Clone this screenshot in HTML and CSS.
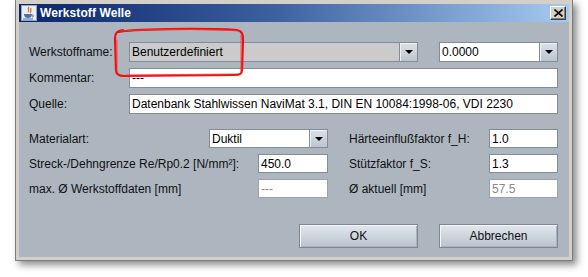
FILE: index.html
```html
<!DOCTYPE html>
<html>
<head>
<meta charset="utf-8">
<link rel="stylesheet" href="styles.css">
</head>
<body>
<div class="stage">
  <div class="window">
    <div class="titlebar">
      <svg class="appicon" width="16" height="16" viewBox="0 0 16 16">
        <rect x="0.5" y="0.5" width="15" height="15" fill="#e8eef6" stroke="#8ea6c8"/>
        <path d="M8 2 C6 4 9 5 7 7 M10 3 C9 5 11 6 9 8" stroke="#e0701c" stroke-width="1.3" fill="none"/>
        <path d="M3 9 H11 C11 12 9 13 7 13 C5 13 3 12 3 9 Z" fill="#4f6fa8"/>
        <path d="M11 10 C13 10 13 12 11 12" stroke="#4f6fa8" stroke-width="1" fill="none"/>
        <path d="M2 14 H12" stroke="#4f6fa8" stroke-width="1"/>
      </svg>
      <span class="title">Werkstoff Welle</span>
      <span class="closebtn">
        <svg width="9" height="8" viewBox="0 0 9 8"><path d="M0.5 0.5 L8.5 7.5 M8.5 0.5 L0.5 7.5" stroke="#000" stroke-width="1.6"/></svg>
      </span>
    </div>
    <div class="content">
      <div class="grid-top">
        <span class="label">Werkstoffname:</span>
        <div class="combo combo-ro">
          <span class="combo-text">Benutzerdefiniert</span>
          <span class="arrow"><i></i></span>
        </div>
        <span></span>
        <div class="combo">
          <span class="combo-text">0.0000</span>
          <span class="arrow"><i></i></span>
        </div>
        <span class="label">Kommentar:</span>
        <div class="field span-wide">---</div>
        <span class="label">Quelle:</span>
        <div class="field span-wide">Datenbank Stahlwissen NaviMat 3.1, DIN EN 10084:1998-06, VDI 2230</div>
      </div>
      <div class="grid-mid">
        <span class="label">Materialart:</span>
        <div class="combo combo-mat">
          <span class="combo-text">Duktil</span>
          <span class="arrow"><i></i></span>
        </div>
        <span></span>
        <span class="label">Härteeinflußfaktor f_H:</span>
        <div class="field">1.0</div>

        <span class="label span-label">Streck-/Dehngrenze Re/Rp0.2 [N/mm²]:</span>
        <div class="field">450.0</div>
        <span></span>
        <span class="label">Stützfaktor f_S:</span>
        <div class="field">1.3</div>

        <span class="label span-label">max. Ø Werkstoffdaten [mm]</span>
        <div class="field disabled">---</div>
        <span></span>
        <span class="label">Ø aktuell [mm]</span>
        <div class="field disabled">57.5</div>
      </div>
      <div class="buttons">
        <button class="btn">OK</button>
        <button class="btn">Abbrechen</button>
      </div>
    </div>
  </div>
  <svg class="markup" width="140" height="60" viewBox="110 25 140 60">
    <path d="M119 32 C130 29 200 28 237 30 C242 31 243 34 243 40 L242 70 C242 74 240 75 235 75 L124 76 C118 76 116 74 116 70 L115 38 C115 33 117 31 123 30" fill="none" stroke="#f01010" stroke-width="2.2" stroke-linecap="round"/>
    <path d="M121 31 C150 29 210 29 239 31 M241 35 L241 72 M236 74 L126 75 M117 71 L117 40" fill="none" stroke="#ff3030" stroke-width="1" stroke-linecap="round" opacity="0.8"/>
  </svg>
</div>
</body>
</html>
```

FILE: styles.css
```css
html, body {
  margin: 0;
  padding: 0;
  background: #ffffff;
}

.stage {
  position: relative;
  width: 588px;
  height: 277px;
  padding-left: 15px;
  box-sizing: border-box;
  font-family: "Liberation Sans", Arial, sans-serif;
  font-size: 12px;
  color: #000;
}

.window {
  width: 558px;
  box-sizing: border-box;
  border: 1px solid #7c7c7c;
  border-top: 0;
  padding: 4px 3px 3px 3px;
  background: #d4d0c8;
  box-shadow: 4px 4px 7px rgba(0, 0, 0, 0.45);
}

.titlebar {
  height: 18px;
  display: flex;
  align-items: center;
  padding: 0 3px 0 2px;
  background: linear-gradient(to right, #0a246a 0%, #3a5e9e 45%, #a6caf0 100%);
}

.appicon {
  flex: none;
}

.title {
  margin-left: 3px;
  color: #ffffff;
  font-weight: bold;
  font-size: 12px;
  letter-spacing: 0.1px;
  flex: 1;
}

.closebtn {
  width: 16px;
  height: 14px;
  box-sizing: border-box;
  background: #d4d0c8;
  border: 1px solid;
  border-color: #ffffff #404040 #404040 #ffffff;
  box-shadow: inset -1px -1px 0 #808080;
  display: flex;
  align-items: center;
  justify-content: center;
}

.content {
  height: 235px;
  box-sizing: border-box;
  background: #adb6bf;
  padding: 20px 11px 0 10px;
}

.label {
  display: flex;
  align-items: center;
  white-space: nowrap;
  color: #111;
  min-width: 0;
}

.grid-top {
  display: grid;
  grid-template-columns: 100px 289px 21px 119px;
  grid-template-rows: 20px 20px 20px;
  row-gap: 6px;
}

.span-wide {
  grid-column: 2 / 5;
}

.field {
  box-sizing: border-box;
  background: #ffffff;
  border: 1px solid #838d98;
  padding: 0 2px;
  display: flex;
  align-items: center;
  white-space: nowrap;
  overflow: hidden;
  min-width: 0;
}

.field.disabled {
  color: #8a8a8a;
  border-color: #9aa3ad;
}

.combo {
  box-sizing: border-box;
  display: flex;
  border: 1px solid #838d98;
  background: #ffffff;
  min-width: 0;
}

.combo-ro {
  background: #cbcbcb;
}

.combo-text {
  flex: 1;
  display: flex;
  align-items: center;
  padding-left: 2px;
}

.arrow {
  width: 18px;
  box-sizing: border-box;
  border-left: 1px solid #838d98;
  background: linear-gradient(#dbe1e8, #bcc5cf);
  box-shadow: inset 1px 1px 0 #eef2f6;
  display: flex;
  align-items: center;
  justify-content: center;
}

.arrow i {
  display: block;
  width: 0;
  height: 0;
  border-left: 4px solid transparent;
  border-right: 4px solid transparent;
  border-top: 4px solid #000;
}

.grid-mid {
  margin-top: 15px;
  display: grid;
  grid-template-columns: 180px 49px 70px 21px 140px 69px;
  grid-auto-rows: 19px;
  row-gap: 6px;
}

.combo-mat {
  grid-column: 2 / 4;
}

.span-label {
  grid-column: 1 / 3;
}

.buttons {
  margin-top: 26px;
  display: flex;
  justify-content: flex-end;
  gap: 21px;
}

.btn {
  width: 119px;
  height: 24px;
  box-sizing: border-box;
  border: 1px solid #7d8793;
  background: linear-gradient(#e2e7ed, #b9c3ce);
  box-shadow: inset 1px 1px 0 #f4f6f9, inset -1px -1px 0 #a9b3be;
  font-family: "Liberation Sans", Arial, sans-serif;
  font-size: 12px;
  color: #111;
  padding: 0;
}

.markup {
  position: absolute;
  left: 110px;
  top: 25px;
}
```
